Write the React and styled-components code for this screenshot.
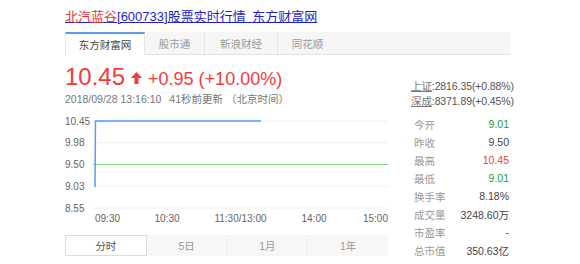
import React from "react";
import styled, { createGlobalStyle } from "styled-components";

const GlobalStyle = createGlobalStyle`
  html, body { margin: 0; padding: 0; background: #fff; }
  body { font-family: "Liberation Sans", "Noto Sans CJK SC", sans-serif; }
`;

const CJK = `"Liberation Sans", "Noto Sans CJK SC", sans-serif`;

const Page = styled.div`
  width: 445px;
  padding: 7px 0 0 65px;
`;

const Title = styled.a`
  display: inline-block;
  font-family: "Liberation Serif", "Noto Sans CJK SC", serif;
  font-size: 13px;
  line-height: 16px;
  color: #1f1fc8;
  text-decoration: underline;
  text-underline-offset: 1px;
  white-space: nowrap;
`;

const TitlePart = styled.span`
  color: ${(p) => p.$color};
  font-family: ${(p) => (p.$sans ? `"Liberation Sans", sans-serif` : "inherit")};
`;

const TabBar = styled.div`
  margin-top: 7px;
  height: 23px;
  display: flex;
  background: #f6f6f6;
  border-bottom: 1px solid #e3e3e3;
  box-sizing: border-box;
`;

const Tab = styled.div`
  box-sizing: border-box;
  width: ${(p) => p.$w}px;
  display: flex;
  align-items: center;
  justify-content: center;
  font-family: ${CJK};
  font-size: 10.5px;
  color: ${(p) => (p.$active ? "#444" : "#999")};
  background: ${(p) => (p.$active ? "#fff" : "transparent")};
  border-top: 2px solid ${(p) => (p.$active ? "#5b9bf0" : "transparent")};
  border-left: ${(p) => (p.$active ? "1px solid #e6e6e6" : "none")};
  border-right: 1px solid ${(p) => (p.$active ? "#e6e6e6" : p.$sep ? "#e6e6e6" : "transparent")};
  height: ${(p) => (p.$active ? "23px" : "22px")};
  padding-bottom: 1px;
`;

const Body = styled.div`
  display: flex;
  gap: 23px;
`;

const Left = styled.div`
  width: 323px;
  display: flex;
  flex-direction: column;
`;

const PriceRow = styled.div`
  margin-top: 8px;
  display: flex;
  align-items: baseline;
  color: #f23c3c;
  height: 28px;
  line-height: 28px;
`;

const Price = styled.span`
  font-family: "Liberation Sans", sans-serif;
  font-size: 24px;
`;

const Arrow = styled.svg`
  width: 11px;
  height: 12px;
  margin: 0 6px 0 6px;
  align-self: center;
  position: relative;
  top: 1px;
`;

const Change = styled.span`
  font-family: "Liberation Sans", sans-serif;
  font-size: 18px;
`;

const DateLine = styled.div`
  margin-top: 1px;
  font-family: ${CJK};
  font-size: 10.5px;
  line-height: 14px;
  color: #777;
  white-space: nowrap;
  span + span { margin-left: 8px; }
`;

const ChartSvg = styled.svg`
  display: block;
  margin-top: 1px;
  width: 323px;
  height: 128px;
  font-family: "Liberation Sans", sans-serif;
  font-size: 10px;
`;

const RangeTabs = styled.div`
  display: flex;
  height: 21px;
  background: #f7f7f7;
`;

const RangeTab = styled.div`
  flex: 1;
  box-sizing: border-box;
  display: flex;
  align-items: center;
  justify-content: center;
  font-family: ${CJK};
  font-size: 10.5px;
  color: ${(p) => (p.$active ? "#555" : "#999")};
  background: ${(p) => (p.$active ? "#fff" : "transparent")};
  border: ${(p) => (p.$active ? "1px solid #dcdcdc" : "none")};
  border-right: ${(p) => (p.$active ? "1px solid #dcdcdc" : p.$last ? "none" : "1px solid #ececec")};
`;

const Right = styled.div`
  width: 99px;
  padding-top: 24px;
  display: flex;
  flex-direction: column;
`;

const IndexLine = styled.div`
  font-family: ${CJK};
  font-size: 10.5px;
  line-height: 15px;
  color: #555;
  white-space: nowrap;
  letter-spacing: -0.1px;
`;

const IndexName = styled.span`
  color: #777;
  text-decoration: underline;
`;

const Stats = styled.div`
  margin-top: 6px;
  display: flex;
  flex-direction: column;
`;

const StatRow = styled.div`
  height: 18px;
  display: flex;
  align-items: center;
  justify-content: space-between;
  padding: 0 1px 0 3px;
  font-family: ${CJK};
  font-size: 10.5px;
`;

const StatLabel = styled.span`
  color: #999;
`;

const StatValue = styled.span`
  color: ${(p) => p.$color || "#444"};
`;

const tabs = [
  { label: "东方财富网", w: 80, active: true },
  { label: "股市通", w: 60, sep: true },
  { label: "新浪财经", w: 73, sep: true },
  { label: "同花顺", w: 60 },
];

const stats = [
  ["今开", "9.01", "#25a025"],
  ["昨收", "9.50"],
  ["最高", "10.45", "#f23c3c"],
  ["最低", "9.01", "#25a025"],
  ["换手率", "8.18%"],
  ["成交量", "3248.60万"],
  ["市盈率", "-"],
  ["总市值", "350.63亿"],
];

const yTicks = [
  ["10.45", 14],
  ["9.98", 35.75],
  ["9.50", 57.5],
  ["9.03", 79.25],
  ["8.55", 101],
];

const xTicks = [
  ["09:30", 30, "start"],
  ["10:30", 102, "middle"],
  ["11:30/13:00", 175.5, "middle"],
  ["14:00", 249, "middle"],
  ["15:00", 323, "end"],
];

function Chart() {
  return (
    <ChartSvg viewBox="0 0 323 128">
      {yTicks.map(([t, y]) => (
        <g key={t}>
          <line x1="28" x2="323" y1={y} y2={y} stroke="#f0f0f0" strokeWidth="1" />
          <text x="0" y={y + 3.5} fill="#666">{t}</text>
        </g>
      ))}
      <line x1="28" x2="323" y1="57.5" y2="57.5" stroke="#7fd27f" strokeWidth="1" />
      <polyline points="30,80 30.5,14 196,14" fill="none" stroke="#5b9bf5" strokeWidth="1.5" />
      {xTicks.map(([t, x, a]) => (
        <text key={t} x={x} y="115" textAnchor={a} fill="#666">{t}</text>
      ))}
    </ChartSvg>
  );
}

export default function App() {
  return (
    <>
      <GlobalStyle />
      <Page>
        <Title href="#">
          <TitlePart $color="#e53333">北汽蓝谷</TitlePart>
          <TitlePart $color="#1f1fc8" $sans>[600733]</TitlePart>
          <TitlePart $color="#1f1fc8">股票实时行情_东方财富网</TitlePart>
        </Title>
        <TabBar>
          {tabs.map((t) => (
            <Tab key={t.label} $w={t.w} $active={t.active} $sep={t.sep}>
              {t.label}
            </Tab>
          ))}
        </TabBar>
        <Body>
          <Left>
            <PriceRow>
              <Price>10.45</Price>
              <Arrow viewBox="0 0 11 12">
                <path d="M5.5 0 L11 6 L7.5 6 L7.5 12 L3.5 12 L3.5 6 L0 6 Z" fill="#f23c3c" />
              </Arrow>
              <Change>+0.95 (+10.00%)</Change>
            </PriceRow>
            <DateLine>
              <span>2018/09/28 13:16:10</span>
              <span>41秒前更新 （北京时间）</span>
            </DateLine>
            <Chart />
            <RangeTabs>
              <RangeTab $active>分时</RangeTab>
              <RangeTab>5日</RangeTab>
              <RangeTab>1月</RangeTab>
              <RangeTab $last>1年</RangeTab>
            </RangeTabs>
          </Left>
          <Right>
            <IndexLine>
              <IndexName>上证</IndexName>:2816.35(+0.88%)
            </IndexLine>
            <IndexLine>
              <IndexName>深成</IndexName>:8371.89(+0.45%)
            </IndexLine>
            <Stats>
              {stats.map(([l, v, c]) => (
                <StatRow key={l}>
                  <StatLabel>{l}</StatLabel>
                  <StatValue $color={c}>{v}</StatValue>
                </StatRow>
              ))}
            </Stats>
          </Right>
        </Body>
      </Page>
    </>
  );
}
